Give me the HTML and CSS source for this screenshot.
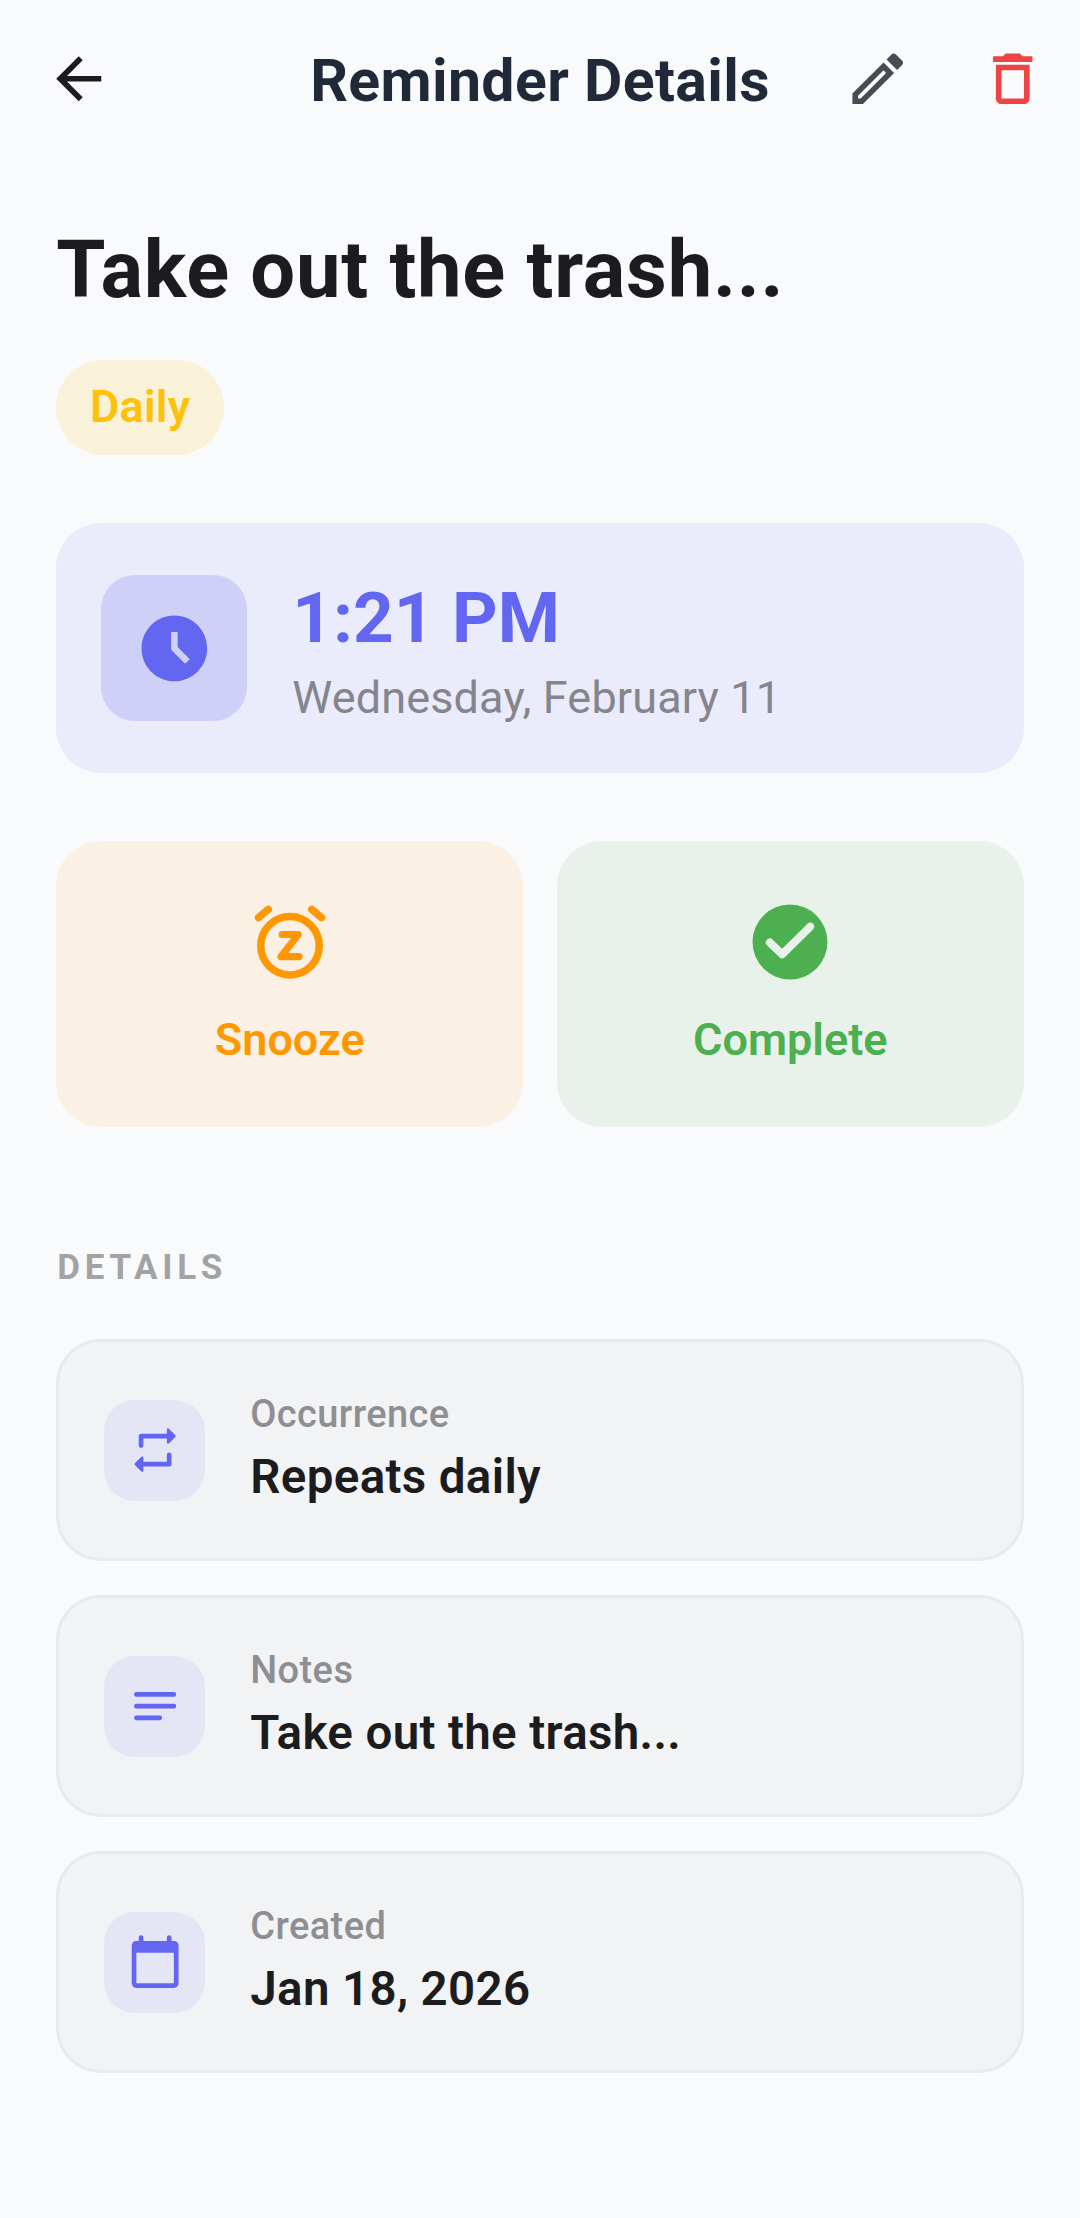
FILE: index.html
```html
<!DOCTYPE html>
<html lang="en">
<head>
  <meta charset="UTF-8">
  <title>Reminder Details</title>
  <link rel="stylesheet" href="styles.css">
</head>
<body>
  <header class="top-bar">
    <button class="icon-btn back-btn">
      <svg class="bar-icon" viewBox="0 0 24 24"><path fill="#1c1c1e" d="M20 11H7.83l5.59-5.59L12 4l-8 8 8 8 1.41-1.41L7.83 13H20v-2z"/></svg>
    </button>
    <h1 class="bar-title">Reminder Details</h1>
    <div class="bar-actions">
      <button class="icon-btn">
        <svg class="bar-icon" viewBox="0 0 24 24"><path fill="#4a4a54" d="M3 17.25V21h3.75L17.81 9.94l-3.75-3.75L3 17.25zM5.92 19H5v-.92l9.06-9.06.92.92L5.92 19zM20.71 5.63l-2.34-2.34c-.2-.2-.45-.29-.71-.29s-.51.1-.7.29l-1.83 1.83 3.75 3.75 1.83-1.83c.39-.39.39-1.02 0-1.41z"/></svg>
      </button>
      <button class="icon-btn">
        <svg class="bar-icon" viewBox="0 0 24 24"><path fill="#ef4444" d="M6 19c0 1.1.9 2 2 2h8c1.1 0 2-.9 2-2V7H6v12zM8 9h8v10H8V9zm7.5-5l-1-1h-5l-1 1H5v2h14V4h-3.5z"/></svg>
      </button>
    </div>
  </header>

  <main class="content">
    <h2 class="reminder-title">Take out the trash...</h2>
    <span class="pill">Daily</span>

    <section class="time-card">
      <div class="time-icon">
        <svg viewBox="0 0 24 24"><path fill="#6366f1" fill-rule="evenodd" d="M11.99 2C6.47 2 2 6.48 2 12s4.47 10 9.99 10C17.52 22 22 17.52 22 12S17.52 2 11.99 2zm3.3 14.71L11 12.41V7h2v4.59l3.71 3.71-1.42 1.41z"/></svg>
      </div>
      <div class="time-text">
        <div class="time-value">1:21 PM</div>
        <div class="time-date">Wednesday, February 11</div>
      </div>
    </section>

    <section class="actions">
      <button class="action snooze">
        <svg viewBox="0 0 24 24" fill="none" stroke="#ff9800" stroke-width="2" stroke-linecap="round" stroke-linejoin="round">
          <circle cx="12" cy="13" r="7.8"/>
          <path d="M3.6 5.5 6.2 3.3M20.4 5.5 17.8 3.3"/>
          <path stroke-width="1.9" d="M9.9 10h4.3l-4.6 5.9h4.8"/>
        </svg>
        <span>Snooze</span>
      </button>
      <button class="action complete">
        <svg viewBox="0 0 24 24"><circle cx="12" cy="12" r="10" fill="#4caf50"/><path d="M6.6 12.1 9.9 15.3 17.4 7.9" fill="none" stroke="#e8f2eb" stroke-width="2.1" stroke-linecap="round" stroke-linejoin="round"/></svg>
        <span>Complete</span>
      </button>
    </section>

    <h3 class="section-label">DETAILS</h3>

    <div class="detail-row">
      <div class="detail-icon">
        <svg viewBox="0 0 24 24"><path fill="#6366f1" d="M7 7h10v1.79c0 .45.54.67.85.35l2.79-2.79c.2-.2.2-.51 0-.71l-2.79-2.79c-.31-.31-.85-.09-.85.36V5H6c-.55 0-1 .45-1 1v4c0 .55.45 1 1 1s1-.45 1-1V7zm10 10H7v-1.79c0-.45-.54-.67-.85-.35l-2.79 2.79c-.2.2-.2.51 0 .71l2.79 2.79c.31.31.85.09.85-.36V19h11c.55 0 1-.45 1-1v-4c0-.55-.45-1-1-1s-1 .45-1 1v3z"/></svg>
      </div>
      <div class="detail-text">
        <div class="detail-label">Occurrence</div>
        <div class="detail-value">Repeats daily</div>
      </div>
    </div>

    <div class="detail-row">
      <div class="detail-icon">
        <svg viewBox="0 0 24 24"><path fill="none" stroke="#6366f1" stroke-width="2" stroke-linecap="round" d="M4 7h16M4 12h16M4 17h10"/></svg>
      </div>
      <div class="detail-text">
        <div class="detail-label">Notes</div>
        <div class="detail-value">Take out the trash...</div>
      </div>
    </div>

    <div class="detail-row">
      <div class="detail-icon">
        <svg viewBox="0 0 24 24"><path fill="#6366f1" d="M20 3h-1V1.500a1 1 0 0 0-2 0V3H7V1.500a1 1 0 0 0-2 0V3H4c-1.100 0-2 .8-2 2v16c0 1.100.9 2 2 2h16c1.100 0 2-.9 2-2V5c0-1.200-.9-2-2-2zm0 18H4V8h16v13z"/></svg>
      </div>
      <div class="detail-text">
        <div class="detail-label">Created</div>
        <div class="detail-value">Jan 18, 2026</div>
      </div>
    </div>
  </main>
</body>
</html>
```

FILE: styles.css
```css
* {
  box-sizing: border-box;
}
body {
  margin: 0;
  min-height: 2218px;
  background-color: #f9fafc;
  font-family: Roboto, "Liberation Sans", sans-serif;
  color: #1c1c1e;
}
button {
  font-family: inherit;
  border: none;
  background: none;
  padding: 0;
}
h1, h2, h3 {
  margin: 0;
}

/* top bar */
.top-bar {
  display: grid;
  grid-template-columns: 1fr auto 1fr;
  align-items: center;
  padding-top: 11px;
}
.back-btn {
  margin-left: 11px;
}
.icon-btn {
  display: flex;
  align-items: center;
  justify-content: center;
  width: 135px;
  height: 135px;
}
.bar-icon {
  width: 67.5px;
  height: 67.5px;
}
.bar-title {
  margin-top: 4px;
  font-size: 59px;
  font-weight: 700;
  line-height: 72px;
  letter-spacing: 0.35px;
  color: #1f2937;
}
.bar-actions {
  display: flex;
  justify-content: flex-end;
}

/* title + pill */
.content {
  padding: 0 56.25px;
}
.reminder-title {
  margin-top: 78px;
  font-size: 79.5px;
  font-weight: 700;
  line-height: 92px;
  letter-spacing: 0.75px;
}
.pill {
  display: inline-block;
  margin-top: 44px;
  padding: 0 33.75px;
  height: 95px;
  line-height: 93px;
  border-radius: 48px;
  background-color: #faf1d9;
  color: #ffc107;
  font-size: 45px;
  font-weight: 600;
  letter-spacing: 0.2px;
}

/* time card */
.time-card {
  display: flex;
  align-items: center;
  gap: 45px;
  margin-top: 68px;
  padding: 0 45px;
  height: 250px;
  border-radius: 45px;
  background-color: #eaebfb;
}
.time-icon {
  display: flex;
  align-items: center;
  justify-content: center;
  width: 146px;
  height: 146px;
  border-radius: 34px;
  background-color: #cfd0f8;
}
.time-icon svg {
  width: 78.75px;
  height: 78.75px;
}
.time-text {
  padding-top: 5px;
}
.time-value {
  font-size: 71px;
  font-weight: 700;
  line-height: 84px;
  color: #6366f1;
}
.time-date {
  margin-top: 10px;
  font-size: 45px;
  line-height: 56px;
  letter-spacing: 0.15px;
  color: #85858c;
}

/* snooze / complete */
.actions {
  display: grid;
  grid-template-columns: 1fr 1fr;
  gap: 33.75px;
  margin-top: 68px;
}
.action {
  display: flex;
  flex-direction: column;
  align-items: center;
  height: 286px;
  padding-top: 56px;
  border-radius: 45px;
  font-size: 45px;
  font-weight: 600;
}
.action svg {
  width: 90px;
  height: 90px;
  margin-bottom: 26px;
}
.snooze {
  background-color: #faf0e3;
  color: #ff9800;
}
.complete {
  background-color: #e8f2eb;
  color: #4caf50;
}

/* details */
.section-label {
  margin-top: 121px;
  margin-bottom: 51px;
  padding-left: 1px;
  font-size: 35px;
  font-weight: 700;
  line-height: 40px;
  letter-spacing: 4.7px;
  color: #a3a3a6;
}
.detail-row {
  display: flex;
  align-items: center;
  gap: 45px;
  height: 222px;
  margin-bottom: 34px;
  padding: 0 45px;
  border: 3px solid #e9eaed;
  border-radius: 45px;
  background-color: #f2f3f5;
}
.detail-icon {
  display: flex;
  align-items: center;
  justify-content: center;
  width: 101px;
  height: 101px;
  border-radius: 31px;
  background-color: #e4e5f5;
}
.detail-icon svg {
  width: 56.25px;
  height: 56.25px;
}
.detail-text {
  padding-bottom: 3px;
}
.detail-label {
  font-size: 38px;
  font-weight: 500;
  line-height: 44px;
  letter-spacing: 0.4px;
  color: #8e8e93;
}
.detail-value {
  margin-top: 13px;
  font-size: 47.5px;
  font-weight: 600;
  line-height: 56px;
  letter-spacing: 0.35px;
}
```
